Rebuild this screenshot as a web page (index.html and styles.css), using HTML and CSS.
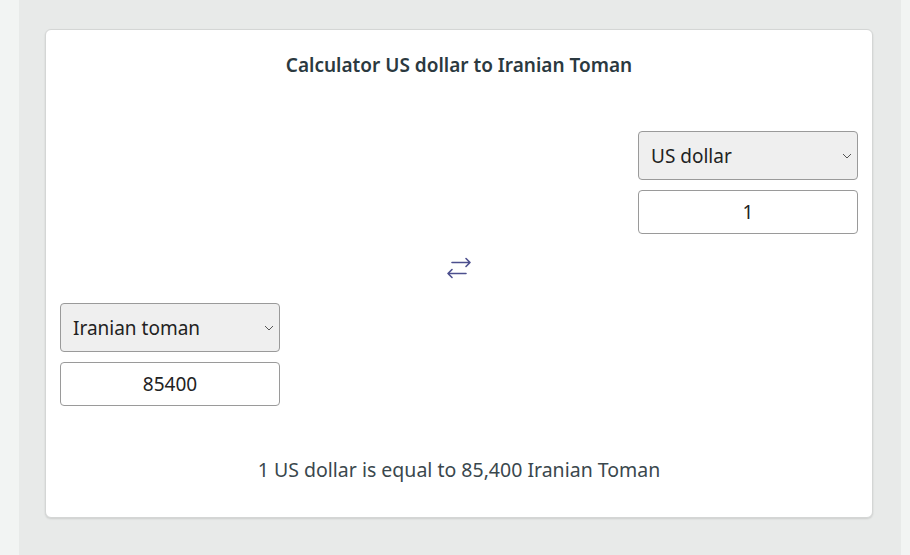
FILE: index.html
```html
<!DOCTYPE html>
<html lang="en">
<head>
    <meta charset="UTF-8">
    <meta name="viewport" content="width=device-width, initial-scale=1.0">
    <title>Currency Calculator</title>
    <link rel="stylesheet" href="styles.css">
</head>
<body>
    <div class="page">
        <div class="card">
            <h1 class="title">Calculator US dollar to Iranian Toman</h1>

            <div class="converter">
                <!-- From currency -->
                <div class="side side-from">
                    <div class="select-wrap">
                        <select id="from-currency">
                            <option>US dollar</option>
                            <option>Iranian toman</option>
                        </select>
                        <svg class="chevron" width="10" height="6" viewBox="0 0 10 6"><path d="M1 1l4 4 4-4" fill="none" stroke="#555" stroke-width="1"/></svg>
                    </div>
                    <input type="text" id="from-amount" value="1">
                </div>

                <!-- Swap -->
                <button class="swap" onclick="swapCurrencies()" aria-label="swap">
                    <svg width="28" height="24" viewBox="0 0 28 24">
                        <path d="M7 6.5h18M21 2.5l4 4-4 4M21 17.5H3M7 13.5l-4 4 4 4" fill="none" stroke="#4c4f8e" stroke-width="1.6" stroke-linecap="round" stroke-linejoin="round"/>
                    </svg>
                </button>

                <!-- To currency -->
                <div class="side side-to">
                    <div class="select-wrap">
                        <select id="to-currency">
                            <option>Iranian toman</option>
                            <option>US dollar</option>
                        </select>
                        <svg class="chevron" width="10" height="6" viewBox="0 0 10 6"><path d="M1 1l4 4 4-4" fill="none" stroke="#555" stroke-width="1"/></svg>
                    </div>
                    <input type="text" id="to-amount" value="85400">
                </div>
            </div>

            <p class="result" id="result">1 US dollar is equal to 85,400 Iranian Toman</p>
        </div>
    </div>

    <script>
        // Scambia le due valute
        function swapCurrencies() {
            const from = document.getElementById('from-currency');
            const to = document.getElementById('to-currency');
            const tmp = from.selectedIndex;
            from.selectedIndex = to.selectedIndex === 0 ? 1 : 0;
            to.selectedIndex = tmp === 0 ? 1 : 0;
        }
    </script>
</body>
</html>
```

FILE: styles.css
```css
body { font-family: "Noto Sans", "Liberation Sans", sans-serif; background-color: #f2f4f3; margin: 0; padding: 0; }
.page { background: #e8eae9; margin: 0 9px 0 19px; height: 555px; padding: 29px 28px 0 26px; box-sizing: border-box; }
.card { background: #fff; border: 1px solid #d4d6d5; border-radius: 6px; box-shadow: 0 1px 2px rgba(0,0,0,0.12); padding: 23px 14px 35px; }
.title { margin: 0; text-align: center; font-size: 19px; line-height: 24px; font-weight: 600; color: #2b3940; }
.converter { display: flex; flex-direction: column; margin-top: 54px; }
.side { display: flex; flex-direction: column; gap: 10px; width: 220px; }
.side-from { align-self: flex-end; }
.side-to { align-self: flex-start; }
.select-wrap { position: relative; }
.select-wrap select { width: 100%; height: 49px; appearance: none; -webkit-appearance: none; background: #efefef; border: 1px solid #9a9a9a; border-radius: 4px; padding: 0 30px 0 12px; font-family: inherit; font-size: 19px; color: #222; }
.chevron { position: absolute; right: 6px; top: 22px; }
.side input { width: 100%; height: 44px; box-sizing: border-box; border: 1px solid #9a9a9a; border-radius: 4px; text-align: center; font-family: inherit; font-size: 19px; color: #222; }
.swap { align-self: center; background: none; border: none; padding: 0; margin: 22px 0 23px; height: 24px; cursor: pointer; }
.result { margin: 52px 0 0; text-align: center; font-size: 19.5px; line-height: 24px; color: #3a474d; }
```
